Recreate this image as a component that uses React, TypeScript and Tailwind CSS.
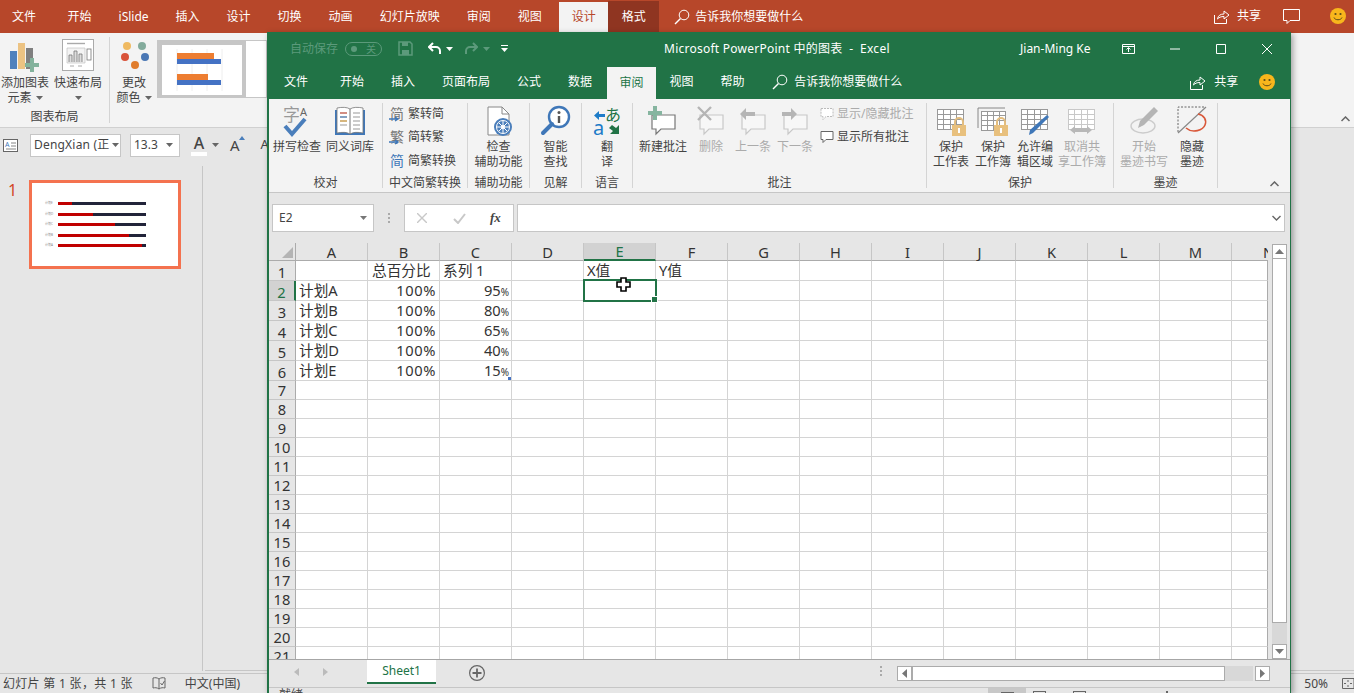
import React from "react";

const colLetters = ["A", "B", "C", "D", "E", "F", "G", "H", "I", "J", "K", "L", "M", "N"];
const rowNumbers = Array.from({ length: 21 }, (_, i) => i + 1);

const cells: Record<string, string> = {
  B1: "总百分比",
  C1: "系列 1",
  E1: "X值",
  F1: "Y值",
  A2: "计划A",
  A3: "计划B",
  A4: "计划C",
  A5: "计划D",
  A6: "计划E",
  B2: "100%",
  B3: "100%",
  B4: "100%",
  B5: "100%",
  B6: "100%",
  C2: "95",
  C3: "80",
  C4: "65",
  C5: "40",
  C6: "15",
};

const thumbBars = [
  { label: "计划E", red: 14 },
  { label: "计划D", red: 35 },
  { label: "计划C", red: 57 },
  { label: "计划B", red: 71 },
  { label: "计划A", red: 84 },
];

function Caret({ color = "#666" }: { color?: string }) {
  return (
    <svg width="7" height="4" viewBox="0 0 7 4">
      <path d="M0 0h7L3.5 4z" fill={color} />
    </svg>
  );
}

function SearchIcon() {
  return (
    <svg width="16" height="16" viewBox="0 0 16 16" fill="none" stroke="#fff" strokeWidth="1">
      <circle cx="10" cy="6" r="4.8" />
      <path d="M6.5 9.5L1 15" strokeWidth="1.4" />
    </svg>
  );
}

function ShareIcon() {
  return (
    <svg width="16" height="15" viewBox="0 0 16 15" fill="none" stroke="#fff" strokeWidth="1">
      <path d="M.5 6v8.5h12V10" />
      <path d="M3.5 10c.5-3.5 3-5 6.5-5V2l5 4-5 4V7.5c-3 0-5 .8-6.5 2.5z" />
    </svg>
  );
}

function Smiley() {
  return (
    <svg width="16" height="16" viewBox="0 0 16 16">
      <circle cx="8" cy="8" r="8" fill="#f8b61c" />
      <circle cx="5.5" cy="6" r="1.1" fill="#5a4a1a" />
      <circle cx="10.5" cy="6" r="1.1" fill="#5a4a1a" />
      <path d="M4 9.5c1 3 7 3 8 0" fill="none" stroke="#5a4a1a" strokeWidth="1" />
    </svg>
  );
}

function Bubble({ color = "#888", fill = "#fff" }: { color?: string; fill?: string }) {
  return <path d="M5 10h23v14H14l-5 5v-5H5z" fill={fill} stroke={color} strokeWidth="1.2" />;
}

function SmallBubble({ color = "#666", dashed }: { color?: string; dashed?: boolean }) {
  return (
    <svg width="14" height="14" viewBox="0 0 14 14">
      <path
        d="M1 1.5h12v8H6l-3 3v-3H1z"
        fill="#fff"
        stroke={color}
        strokeWidth="1"
        strokeDasharray={dashed ? "2 1" : undefined}
      />
    </svg>
  );
}

function SpellIcon() {
  return (
    <svg width="32" height="32" viewBox="0 0 32 32" overflow="visible">
      <text x="2" y="16" fontSize="17" fill="#999" fontFamily="Noto Sans CJK SC">字</text>
      <text x="19" y="11" fontSize="11" fill="#666" fontFamily="Noto Sans">A</text>
      <path d="M4 21l7 8L24 14" fill="none" stroke="#4a7ebb" strokeWidth="4" />
    </svg>
  );
}

function BookIcon() {
  return (
    <svg width="32" height="32" viewBox="0 0 32 32">
      <path d="M1 5h30v25H1z" fill="#3f77b8" />
      <path d="M3 3c5-1 10-1 13 1 3-2 8-2 13-1v25c-5-1-10-1-13 1-3-2-8-2-13-1z" fill="#fff" stroke="#777" strokeWidth=".8" />
      <path d="M16 4v25" stroke="#777" />
      <path d="M6 8h7M6 12h7M6 16h7M6 20h7M19 8h7M19 12h7M19 16h7M19 20h7M19 24h7" stroke="#999" />
      <path d="M6 8h7" stroke="#d9503a" />
      <path d="M6 12h7" stroke="#3f77b8" />
      <path d="M6 16h7" stroke="#e0a030" />
    </svg>
  );
}

function ConvertIcon({ ch, plain }: { ch: string; plain?: boolean }) {
  return (
    <svg width="16" height="16" viewBox="0 0 16 16" overflow="visible">
      <text x="1" y="13" fontSize="14" fill={plain ? "#3f77b8" : "#777"} fontFamily="Noto Sans CJK SC">{ch}</text>
      {!plain && <path d="M0 13h8M6 11l3 2-3 2" fill="none" stroke="#3f77b8" strokeWidth="1.4" />}
    </svg>
  );
}

function AccessIcon() {
  return (
    <svg width="32" height="32" viewBox="0 0 32 32">
      <path d="M5 2h14l7 7v21H5z" fill="#fff" stroke="#888" />
      <path d="M19 2v7h7" fill="none" stroke="#888" />
      <circle cx="20" cy="22" r="9" fill="#4a7ebb" />
      <circle cx="20" cy="22" r="6.5" fill="none" stroke="#fff" strokeWidth="1" />
      <path d="M20 16v12M14 22h12M16 18l8 8M24 18l-8 8" stroke="#fff" strokeWidth="1" />
      <circle cx="20" cy="22" r="2" fill="#fff" />
    </svg>
  );
}

function LookupIcon() {
  return (
    <svg width="32" height="32" viewBox="0 0 32 32">
      <circle cx="19" cy="12" r="10" fill="#fff" stroke="#3f77b8" strokeWidth="2.4" />
      <path d="M12 19L3 28" stroke="#3f77b8" strokeWidth="4" strokeLinecap="round" />
      <circle cx="19" cy="7.5" r="1.5" fill="#555" />
      <path d="M19 11v7" stroke="#555" strokeWidth="2.4" />
    </svg>
  );
}

function TranslateIcon() {
  return (
    <svg width="32" height="32" viewBox="0 0 32 32" overflow="visible">
      <text x="14" y="16" fontSize="16" fill="#217346" fontFamily="Noto Sans CJK JP">あ</text>
      <text x="2" y="30" fontSize="20" fill="#1e7cc8" fontFamily="Noto Sans">a</text>
      <path d="M3 10.5L8 6v3h6v3H8v3z" fill="#1e7cc8" />
      <path d="M28 29v-9l-3 3-4-3-3 3 4 3-3 3z" fill="#217346" />
    </svg>
  );
}

function NewCommentIcon() {
  return (
    <svg width="32" height="32" viewBox="0 0 32 32">
      <Bubble color="#777" />
      <path d="M6 1h4v5h5v4h-5v5H6v-5H1V6h5z" fill="#86b5a0" />
    </svg>
  );
}

function DeleteCommentIcon() {
  return (
    <svg width="32" height="32" viewBox="0 0 32 32">
      <Bubble color="#c8c8c8" fill="#f7f7f7" />
      <path d="M3 2l13 13M16 2L3 15" stroke="#b5b5b5" strokeWidth="2.4" />
    </svg>
  );
}

function ArrowCommentIcon({ right }: { right?: boolean }) {
  return (
    <svg width="32" height="32" viewBox="0 0 32 32">
      <Bubble color="#c8c8c8" fill="#f7f7f7" />
      <path
        d={right ? "M3 7h9V3l6 6-6 6v-4H3z" : "M18 7H9V3L3 9l6 6v-4h9z"}
        fill="#b5b5b5"
      />
    </svg>
  );
}

function SheetGrid({ color = "#999", x = 2, y = 4, w = 26, h = 20 }: { color?: string; x?: number; y?: number; w?: number; h?: number }) {
  const cols = [0.25, 0.5, 0.75];
  const rows = [0.25, 0.5, 0.75];
  return (
    <g stroke={color} strokeWidth="1" fill="#fff" shapeRendering="crispEdges">
      <rect x={x} y={y} width={w} height={h} />
      {cols.map((c) => (
        <path key={c} d={`M${x + w * c} ${y}v${h}`} />
      ))}
      {rows.map((r) => (
        <path key={r} d={`M${x} ${y + h * r}h${w}`} />
      ))}
    </g>
  );
}

function Lock() {
  return (
    <g>
      <path d="M20 20v-3a4 4 0 0 1 8 0v3" fill="none" stroke="#e3bd7e" strokeWidth="2" />
      <rect x="17" y="20" width="14" height="11" fill="#e8c07d" />
      <rect x="23" y="23" width="2" height="5" fill="#fff" />
    </g>
  );
}

function ProtectSheetIcon() {
  return (
    <svg width="32" height="32" viewBox="0 0 32 32">
      <SheetGrid />
      <Lock />
    </svg>
  );
}

function ProtectBookIcon() {
  return (
    <svg width="32" height="32" viewBox="0 0 32 32">
      <path d="M1 3h27" stroke="#888" />
      <path d="M1 3v20" stroke="#888" />
      <SheetGrid x={4} y={6} w={24} h={19} />
      <Lock />
    </svg>
  );
}

function AllowEditIcon() {
  return (
    <svg width="32" height="32" viewBox="0 0 32 32">
      <SheetGrid />
      <path d="M28 10l2 2-16 16-4 2 1-5z" fill="#3f77b8" />
    </svg>
  );
}

function UnshareIcon() {
  return (
    <svg width="32" height="32" viewBox="0 0 32 32">
      <SheetGrid color="#c8c8c8" />
      <path d="M4 25l5-4v2h12v-2l5 4-5 4v-2H9v2z" fill="#b8b8b8" />
    </svg>
  );
}

function InkIcon() {
  return (
    <svg width="32" height="32" viewBox="0 0 32 32">
      <ellipse cx="15" cy="21" rx="12" ry="7" fill="none" stroke="#ccc" strokeWidth="1.4" />
      <path d="M26 2l4 4-14 14-6 3 2-7z" fill="#b5b5b5" />
    </svg>
  );
}

function HideInkIcon() {
  return (
    <svg width="32" height="32" viewBox="0 0 32 32">
      <path d="M2 27V2h27" fill="none" stroke="#666" strokeDasharray="2 1.5" />
      <path d="M2 28L30 2" stroke="#888" strokeWidth="1.2" />
      <path d="M22 9c6 1 9 6 7 11s-12 9-19 3" fill="none" stroke="#d9583a" strokeWidth="1.6" />
    </svg>
  );
}

function AddChartIcon() {
  return (
    <svg width="32" height="32" viewBox="0 0 32 32">
      <rect x="1" y="10" width="7" height="18" fill="#4f81bd" />
      <rect x="9" y="2" width="7" height="26" fill="#ecc383" />
      <rect x="17" y="7" width="7" height="21" fill="#7f7f7f" />
      <path d="M21 17h4v5h5v4h-5v5h-4v-5h-5v-4h5z" fill="#83b29c" />
    </svg>
  );
}

function QuickLayoutIcon() {
  return (
    <svg width="32" height="32" viewBox="0 0 32 32">
      <rect x=".5" y=".5" width="31" height="31" fill="#fff" stroke="#aaa" />
      <path d="M5 4.5h18" stroke="#aaa" strokeWidth="1.4" />
      <path d="M5 9h18v15H5z" fill="#f3f3f3" stroke="#bbb" strokeWidth=".6" />
      <path d="M7 23v-7h3v7M12 23v-11h3v11M17 23v-8h3v8" fill="#ddd" stroke="#777" strokeWidth=".8" />
      <rect x="25" y="10" width="4" height="11" fill="#fff" stroke="#777" strokeWidth=".8" />
      <path d="M8 27h4M16 27h4" stroke="#aaa" />
    </svg>
  );
}

function ColorsIcon() {
  return (
    <svg width="32" height="32" viewBox="0 0 32 32">
      <circle cx="9" cy="5" r="4" fill="#efb961" />
      <circle cx="24" cy="5" r="4" fill="#83ab9c" />
      <circle cx="7" cy="16" r="4" fill="#d9533a" />
      <circle cx="27" cy="16" r="4" fill="#4a77b4" />
      <circle cx="17" cy="24" r="4" fill="#e07c2c" />
    </svg>
  );
}

function GalleryChart() {
  return (
    <svg width="80" height="50" viewBox="0 0 80 50">
      <rect width="80" height="50" fill="#fff" />
      <path d="M15 4v42M30 4v42M45 4v42M60 4v42" stroke="#eee" />
      <rect x="15" y="8" width="37" height="6" fill="#ed7d31" />
      <rect x="15" y="14" width="44" height="5" fill="#4472c4" />
      <rect x="15" y="29" width="31" height="6" fill="#ed7d31" />
      <rect x="15" y="35" width="44" height="5" fill="#4472c4" />
    </svg>
  );
}

function Tab({ label, className = "" }: { label: string; className?: string }) {
  return <div className={`px-[13.5px] leading-none whitespace-nowrap ${className}`}>{label}</div>;
}

function RibbonGroup({ label, width, className = "", children }: { label: string; width: string; className?: string; children: React.ReactNode }) {
  return (
    <div className={`flex flex-col h-[85px] mt-[4px] border-r border-[#d4d4d4] shrink-0 ${width}`}>
      <div className={`flex flex-1 ${className}`}>{children}</div>
      <div className="h-[13px] leading-[16px] text-center whitespace-nowrap">{label}</div>
    </div>
  );
}

function RibbonButton({ icon, lines, width, disabled }: { icon: React.ReactNode; lines: string[]; width: string; disabled?: boolean }) {
  return (
    <div className={`flex flex-col items-center pt-[2px] shrink-0 ${width} ${disabled ? "text-[#ababab]" : ""}`}>
      <div className="h-[32px] w-[32px] mb-[2px]">{icon}</div>
      {lines.map((l) => (
        <div key={l} className="leading-[15px] whitespace-nowrap">{l}</div>
      ))}
    </div>
  );
}

function SmallRow({ icon, label, disabled }: { icon: React.ReactNode; label: string; disabled?: boolean }) {
  return (
    <div className={`flex items-center gap-[3px] h-[23.5px] whitespace-nowrap ${disabled ? "text-[#ababab]" : ""}`}>
      {icon}
      <span>{label}</span>
    </div>
  );
}

function ScrollBtn({ path, className = "" }: { path: string; className?: string }) {
  return (
    <div className={`flex items-center justify-center w-[15px] h-[15px] bg-white border border-[#ababab] shrink-0 ${className}`}>
      <svg width="9" height="9" viewBox="0 0 9 9">
        <path d={path} fill="#777" />
      </svg>
    </div>
  );
}

function Dots() {
  return (
    <>
      <span className="w-[2px] h-[2px] bg-[#aaa]" />
      <span className="w-[2px] h-[2px] bg-[#aaa]" />
      <span className="w-[2px] h-[2px] bg-[#aaa]" />
    </>
  );
}

function PptRibbon() {
  return (
    <div className="flex h-[95px] bg-[#f3f3f3] border-b border-[#d0d0d0] text-[#444] text-[12px]">
      <div className="flex flex-col w-[110px] h-[86px] mt-[4px] border-r border-[#d4d4d4] shrink-0">
        <div className="flex flex-1">
          <div className="flex flex-col items-center w-[50px] shrink-0">
            <div className="h-[32px] w-[32px] mt-[4px] mb-[2px]"><AddChartIcon /></div>
            <div className="leading-[15px] whitespace-nowrap">添加图表</div>
            <div className="flex items-center gap-[4px] leading-[15px]">元素 <Caret /></div>
          </div>
          <div className="flex flex-col items-center w-[56px] shrink-0">
            <div className="h-[32px] w-[32px] mt-[2px] mb-[4px]"><QuickLayoutIcon /></div>
            <div className="leading-[15px] whitespace-nowrap">快速布局</div>
            <div className="h-[15px] flex items-center"><Caret /></div>
          </div>
        </div>
        <div className="h-[14px] leading-[15px] text-center">图表布局</div>
      </div>
      <div className="flex flex-col items-center w-[44px] ml-[2px] mt-[4px] shrink-0">
        <div className="h-[32px] w-[32px] mt-[4px] mb-[2px]"><ColorsIcon /></div>
        <div className="leading-[15px]">更改</div>
        <div className="flex items-center gap-[4px] leading-[15px]">颜色 <Caret /></div>
      </div>
      <div className="flex ml-[1px] mt-[7px] h-[58px] shrink-0 border border-[#c6c6c6] bg-white">
        <div className="border-[4px] border-[#c6c6c6] h-[56px]"><GalleryChart /></div>
        <div className="w-[20px] bg-white" />
      </div>
    </div>
  );
}

function PptFontRow() {
  return (
    <div className="flex items-center h-[38px] pb-[4px] bg-[#e6e6e6] text-[#444] text-[12px]">
      <svg className="ml-[3px]" width="15" height="13" viewBox="0 0 15 13" overflow="visible">
        <rect x=".5" y=".5" width="14" height="12" fill="#fff" stroke="#666" />
        <text x="2" y="8" fontSize="7" fill="#3f77b8" fontFamily="Noto Sans">A</text>
        <path d="M8 4h5M8 7h5M3 10h10" stroke="#666" strokeWidth=".8" />
      </svg>
      <div className="flex items-center justify-between ml-[12px] w-[91px] h-[23px] px-[3px] bg-white border border-[#c6c6c6] whitespace-nowrap">
        <span className="tracking-[0.2px]">DengXian (正</span>
        <span className="shrink-0 pl-[2px]"><Caret /></span>
      </div>
      <div className="flex items-center justify-between ml-[9px] w-[50px] h-[23px] px-[3px] pr-[6px] bg-white border border-[#c6c6c6]">
        <span>13.3</span>
        <Caret />
      </div>
      <div className="ml-[11px] flex flex-col items-center w-[16px] text-[16px] leading-[17px] font-medium">
        <span>A</span>
        <span className="w-[16px] h-[4px] bg-white" />
      </div>
      <span className="ml-[5px]"><Caret /></span>
      <span className="ml-[11px] relative text-[15px]">
        A
        <svg className="absolute top-[2px] -right-[5px]" width="6" height="4" viewBox="0 0 6 4"><path d="M0 4l3-4 3 4z" fill="#4a7ebb" /></svg>
      </span>
      <span className="ml-[21px] text-[13px]">A</span>
    </div>
  );
}

function SlidePanel() {
  return (
    <div className="flex flex-1 min-h-0 bg-[#e6e6e6]">
      <div className="flex w-[203px] h-[505px] border-r border-[#c6c6c6] pt-[14px] shrink-0">
        <div className="w-[29px] pl-[8px] text-[16px] leading-[20px] text-[#d24726]">1</div>
        <div className="flex flex-col justify-center gap-[7.5px] w-[152px] h-[89px] border-[3px] border-[#f4724f] bg-white pl-[13px]">
          {thumbBars.map((b) => (
            <div key={b.label} className="flex items-center h-[3px]">
              <span className="w-[13px] text-[3px] leading-[3px] text-[#888] whitespace-nowrap">{b.label}</span>
              <div className="w-[88px] h-[3px] bg-[#22243a]">
                <div className="h-[3px] bg-[#c00000]" style={{ width: b.red }} />
              </div>
            </div>
          ))}
        </div>
      </div>
      <div className="flex-1 h-[505px] border-b border-[#c6c6c6] ml-[2px]" />
    </div>
  );
}

function PptStatus() {
  return (
    <div className="flex items-center h-[20px] bg-[#e6e6e6] border-t border-[#c6c6c6] text-[#444] text-[12px]">
      <span className="ml-[3px] whitespace-nowrap tracking-[0.3px]">幻灯片 第 1 张，共 1 张</span>
      <svg className="ml-[19px]" width="14" height="13" viewBox="0 0 14 13" fill="none" stroke="#666">
        <path d="M7 2C5 .5 3 .5 1 1v10c2-.5 4-.5 6 1 2-1.5 4-1.5 6-1V1c-2-.5-4-.5-6 1zM7 2v10" />
        <path d="M8.5 6l1.5 2 2.5-4" />
      </svg>
      <span className="ml-[19px] whitespace-nowrap">中文(中国)</span>
      <span className="ml-auto mr-[14px]">50%</span>
      <svg width="12" height="13" viewBox="0 0 12 13" fill="none" stroke="#666">
        <path d="M.5 1.5h11.5v10H.5z" />
        <path d="M6 3v2M6 8v2M2 6.5h2M8 6.5h2" />
      </svg>
    </div>
  );
}

function ExcelTitleBar() {
  return (
    <div className="flex items-center h-[33px] bg-[#217346] text-white text-[12px] shrink-0">
      <span className="ml-[21px] text-[#5c9a7b] whitespace-nowrap">自动保存</span>
      <div className="flex items-center justify-between ml-[7px] w-[37px] h-[14px] px-[5px] rounded-full border border-[#5c9a7b] text-[#5c9a7b] text-[10px] leading-none">
        <span className="w-[6px] h-[6px] rounded-full bg-[#5c9a7b]" />
        <span>关</span>
      </div>
      <svg className="ml-[16px]" width="15" height="15" viewBox="0 0 15 15">
        <path d="M1 1h11l2 2v11H1z" fill="none" stroke="#5c9a7b" strokeWidth="1.5" />
        <path d="M4 1h6v4H4zM4 9h7v5H4z" fill="#5c9a7b" />
      </svg>
      <svg className="ml-[15px]" width="14" height="13" viewBox="0 0 14 13" fill="none" stroke="#fff" strokeWidth="2">
        <path d="M5 1L1 5l4 4" />
        <path d="M1 5h7a4 4 0 0 1 4 4v3" />
      </svg>
      <span className="ml-[4px]"><Caret color="#fff" /></span>
      <svg className="ml-[11px]" width="14" height="13" viewBox="0 0 14 13" fill="none" stroke="#5c9a7b" strokeWidth="2">
        <path d="M9 1l4 4-4 4" />
        <path d="M13 5H6a4 4 0 0 0-4 4v3" />
      </svg>
      <span className="ml-[5px]"><Caret color="#5c9a7b" /></span>
      <svg className="ml-[11px]" width="7" height="7" viewBox="0 0 7 7">
        <path d="M0 0h7v1H0zM0 3h7L3.5 7z" fill="#fff" />
      </svg>
      <span className="ml-[156px] w-[227px] whitespace-pre tracking-[0.25px]">Microsoft PowerPoint 中的图表  -  Excel</span>
      <span className="ml-[129px] w-[76px] whitespace-nowrap">Jian-Ming Ke</span>
      <svg className="ml-[26px]" width="13" height="10" viewBox="0 0 13 10" fill="none" stroke="#fff">
        <path d="M.5.5h12v9H.5zM.5 2.5h12M6.5 8V4M4.5 5.5l2-2 2 2" />
      </svg>
      <svg className="ml-[35px]" width="10" height="10" viewBox="0 0 10 10"><path d="M0 5h10" stroke="#fff" /></svg>
      <svg className="ml-[36px]" width="10" height="10" viewBox="0 0 10 10"><path d="M.5.5h9v9h-9z" fill="none" stroke="#fff" /></svg>
      <svg className="ml-[36px]" width="10" height="10" viewBox="0 0 10 10"><path d="M0 0l10 10M10 0L0 10" stroke="#fff" /></svg>
    </div>
  );
}

function ExcelTabs() {
  return (
    <div className="flex items-stretch h-[34px] bg-[#217346] text-white text-[12px] shrink-0">
      <div className="flex items-center pl-[15px] pr-[13.5px]">文件</div>
      <Tab label="开始" className="ml-[5px] flex items-center" />
      <Tab label="插入" className="flex items-center" />
      <Tab label="页面布局" className="flex items-center" />
      <Tab label="公式" className="flex items-center" />
      <Tab label="数据" className="flex items-center" />
      <div className="flex items-center justify-center w-[49px] ml-[1.5px] mt-[2px] bg-[#f3f3f3] text-[#217346]">审阅</div>
      <Tab label="视图" className="flex items-center" />
      <Tab label="帮助" className="flex items-center" />
      <div className="flex items-center ml-[14px]">
        <SearchIcon />
        <span className="ml-[6px] whitespace-nowrap">告诉我你想要做什么</span>
      </div>
      <div className="flex items-center ml-[288px]">
        <ShareIcon />
        <span className="ml-[8px]">共享</span>
      </div>
      <div className="flex items-center ml-[21px]"><Smiley /></div>
    </div>
  );
}

function ExcelRibbon() {
  return (
    <div className="relative flex h-[94px] bg-[#f3f3f3] border-b border-[#c6c6c6] text-[#444] text-[12px] shrink-0">
      <RibbonGroup label="校对" width="w-[114px]" className="pl-[1.5px]">
        <RibbonButton icon={<SpellIcon />} lines={["拼写检查"]} width="w-[53px]" />
        <RibbonButton icon={<BookIcon />} lines={["同义词库"]} width="w-[53px]" />
      </RibbonGroup>
      <RibbonGroup label="中文简繁转换" width="w-[85px]" className="flex-col pl-[6px] -mt-[1px]">
        <SmallRow icon={<ConvertIcon ch="简" />} label="繁转简" />
        <SmallRow icon={<ConvertIcon ch="繁" />} label="简转繁" />
        <SmallRow icon={<ConvertIcon ch="简" plain />} label="简繁转换" />
      </RibbonGroup>
      <RibbonGroup label="辅助功能" width="w-[62px]">
        <RibbonButton icon={<AccessIcon />} lines={["检查", "辅助功能"]} width="w-full" />
      </RibbonGroup>
      <RibbonGroup label="见解" width="w-[52px]">
        <RibbonButton icon={<LookupIcon />} lines={["智能", "查找"]} width="w-full" />
      </RibbonGroup>
      <RibbonGroup label="语言" width="w-[51px]">
        <RibbonButton icon={<TranslateIcon />} lines={["翻", "译"]} width="w-full" />
      </RibbonGroup>
      <RibbonGroup label="批注" width="w-[294px]" className="pl-[4px]">
        <RibbonButton icon={<NewCommentIcon />} lines={["新建批注"]} width="w-[52px]" />
        <RibbonButton icon={<DeleteCommentIcon />} lines={["删除"]} width="w-[44px]" disabled />
        <RibbonButton icon={<ArrowCommentIcon />} lines={["上一条"]} width="w-[40px]" disabled />
        <RibbonButton icon={<ArrowCommentIcon right />} lines={["下一条"]} width="w-[44px]" disabled />
        <div className="flex flex-col ml-[3px] -mt-[1px]">
          <SmallRow icon={<SmallBubble color="#bbb" dashed />} label="显示/隐藏批注" disabled />
          <SmallRow icon={<SmallBubble />} label="显示所有批注" />
        </div>
      </RibbonGroup>
      <RibbonGroup label="保护" width="w-[187px]" className="pl-[3px]">
        <RibbonButton icon={<ProtectSheetIcon />} lines={["保护", "工作表"]} width="w-[42px]" />
        <RibbonButton icon={<ProtectBookIcon />} lines={["保护", "工作簿"]} width="w-[42px]" />
        <RibbonButton icon={<AllowEditIcon />} lines={["允许编", "辑区域"]} width="w-[42px]" />
        <RibbonButton icon={<UnshareIcon />} lines={["取消共", "享工作簿"]} width="w-[52px]" disabled />
      </RibbonGroup>
      <RibbonGroup label="墨迹" width="w-[104px]" className="pl-[4px]">
        <RibbonButton icon={<InkIcon />} lines={["开始", "墨迹书写"]} width="w-[52px]" disabled />
        <RibbonButton icon={<HideInkIcon />} lines={["隐藏", "墨迹"]} width="w-[44px]" />
      </RibbonGroup>
      <svg className="absolute right-[11px] bottom-[5px]" width="9" height="6" viewBox="0 0 9 6" fill="none" stroke="#666" strokeWidth="1.5">
        <path d="M.5 5l4-4 4 4" />
      </svg>
    </div>
  );
}

function FormulaBar() {
  return (
    <div className="flex items-center h-[50px] bg-[#e6e6e6] text-[#444] text-[12px] pl-[3px] shrink-0">
      <div className="flex items-center justify-between w-[102px] h-[28px] px-[6px] bg-white border border-[#c6c6c6]">
        <span>E2</span>
        <Caret color="#777" />
      </div>
      <div className="flex flex-col gap-[2px] ml-[14px]">
        <Dots />
      </div>
      <div className="flex items-center w-[110px] h-[28px] ml-[14px] bg-white border border-[#c6c6c6]">
        <svg className="ml-[12px]" width="10" height="10" viewBox="0 0 10 10"><path d="M0 0l10 10M10 0L0 10" stroke="#c8c8c8" strokeWidth="1.4" /></svg>
        <svg className="ml-[26px]" width="13" height="11" viewBox="0 0 13 11" fill="none"><path d="M1 6l4 4 7-9" stroke="#c8c8c8" strokeWidth="2" /></svg>
        <span className="ml-[24px] italic font-bold font-['Liberation_Serif',serif] text-[13px]">fx</span>
      </div>
      <div className="flex items-center justify-end w-[768px] h-[28px] ml-[3px] pr-[3px] bg-white border border-[#c6c6c6]">
        <svg width="9" height="6" viewBox="0 0 9 6" fill="none" stroke="#666" strokeWidth="1.4"><path d="M.5 1l4 4 4-4" /></svg>
      </div>
    </div>
  );
}

function Sheet() {
  return (
    <div className="flex h-[416px] bg-[#e6e6e6] shrink-0">
      <div className="relative w-[999px] h-[416px] overflow-hidden shrink-0 grid grid-cols-[27px_repeat(13,72px)_36px] auto-rows-min content-start text-[14.67px] text-[#333]">
        <div className="h-[18px] flex items-end justify-end pr-[2px] pb-[2px] border-r border-b border-[#ababab]">
          <svg width="11" height="11" viewBox="0 0 11 11"><path d="M11 0v11H0z" fill="#b4b4b4" /></svg>
        </div>
        {colLetters.map((c) => (
          <div
            key={c}
            className={`h-[18px] flex items-center leading-[16px] ${
              c === "E"
                ? "bg-[#d2d2d2] border-b-2 border-[#217346] text-[#217346]"
                : "border-b border-[#ababab]"
            } ${c === "N" ? "justify-start pl-[31px] overflow-hidden" : "justify-center border-r border-r-[#c6c6c6]"}`}
          >
            {c}
          </div>
        ))}
        {rowNumbers.map((r) => {
          const rowH = r <= 6 ? "h-[20px] pt-[2px]" : "h-[19px]";
          return (
            <React.Fragment key={r}>
              <div
                className={`${rowH} flex items-center justify-center border-b border-[#c6c6c6] leading-[16px] ${
                  r === 2 ? "bg-[#d2d2d2] border-r-2 border-r-[#217346] text-[#217346]" : "border-r border-r-[#ababab]"
                }`}
              >
                {r}
              </div>
              {colLetters.map((c) => {
                const key = `${c}${r}`;
                const val = cells[key];
                const right = c === "B" && r > 1;
                const pct = c === "C" && r > 1 && val;
                return (
                  <div
                    key={key}
                    className={`relative ${r <= 6 ? "h-[20px]" : "h-[19px]"} flex items-center bg-white border-b border-r border-[#d4d4d4] whitespace-nowrap leading-none ${
                      right || pct ? "justify-end" : key === "B1" ? "pl-[4px]" : "pl-[3px]"
                    } ${right ? "pr-[3px] tracking-[0.6px]" : pct ? "pr-[2px]" : ""} ${c === "N" ? "border-r-[#ababab]" : ""} ${key === "E2" ? "z-10" : ""}`}
                  >
                    {pct ? (
                      <span>
                        {val}
                        <span className="text-[10px]">%</span>
                      </span>
                    ) : (
                      val
                    )}
                    {key === "C6" && <span className="absolute right-0 bottom-0 w-[3px] h-[3px] bg-[#4472c4]" />}
                    {key === "E2" && (
                      <>
                        <span className="absolute -left-[1px] -top-[2px] w-[74px] h-[23px] border-2 border-[#217346]" />
                        <span className="absolute -right-[3px] -bottom-[3px] w-[7px] h-[7px] bg-[#217346] border border-white" />
                        <svg className="absolute left-[32px] -top-[4px]" width="15" height="15" viewBox="0 0 15 15">
                          <path d="M5 1h5v4h4v5h-4v4H5v-4H1V5h4z" fill="#fff" stroke="#000" strokeWidth="1.6" />
                        </svg>
                      </>
                    )}
                  </div>
                );
              })}
            </React.Fragment>
          );
        })}
      </div>
      <div className="flex flex-col w-[15px] ml-[4px] mt-[1px] shrink-0">
        <ScrollBtn path="M0 7h9L4.5 2z" />
        <div className="h-[365px] bg-white border border-[#ababab] -mt-[1px]" />
        <div className="h-[21px] bg-[#d8d8d8]" />
        <ScrollBtn path="M0 2h9L4.5 7z" />
      </div>
    </div>
  );
}

function SheetTabs() {
  return (
    <div className="flex items-stretch h-[28px] bg-[#e6e6e6] border-t border-[#a6a6a6] shrink-0 relative">
      <svg className="ml-[25px] mt-[8px]" width="5" height="8" viewBox="0 0 5 8"><path d="M5 0v8L0 4z" fill="#bbb" /></svg>
      <svg className="ml-[24px] mt-[8px]" width="5" height="8" viewBox="0 0 5 8"><path d="M0 0v8l5-4z" fill="#bbb" /></svg>
      <div className="flex items-center justify-center w-[69px] h-[24px] ml-[39px] bg-white border-b-2 border-[#217346] text-[#217346] text-[12px]">
        Sheet1
      </div>
      <svg className="ml-[33px] mt-[5px]" width="16" height="16" viewBox="0 0 16 16" fill="none" stroke="#666" strokeWidth="1.2">
        <circle cx="8" cy="8" r="7.4" />
        <path d="M8 3.5v9M3.5 8h9" strokeWidth="1.8" />
      </svg>
      <div className="flex flex-col gap-[2px] ml-[395px] mt-[6px]">
        <Dots />
      </div>
      <div className="flex ml-[15px] mt-[6px] h-[15px]">
        <ScrollBtn path="M7 0v9L2 4.5z" />
        <div className="w-[313px] bg-white border border-[#ababab]" />
        <div className="w-[28px] bg-[#d8d8d8]" />
        <ScrollBtn path="M2 0v9l5-4.5z" className="ml-[2px]" />
      </div>
    </div>
  );
}

function ExcelStatus() {
  return (
    <div className="flex items-start h-[6px] bg-[#e6e6e6] border-t border-[#c6c6c6] overflow-hidden text-[12px] text-[#444]">
      <span className="ml-[10px] leading-[14px]">就绪</span>
      <div className="flex justify-center items-end ml-[685px] h-[6px] w-[38px] bg-[#c8c8c8]">
        <span className="w-[13px] h-[2px] border-t border-x border-[#666]" />
      </div>
      <span className="ml-[7px] mt-[3px] w-[13px] h-[2px] border-t border-x border-[#666]" />
      <span className="ml-[27px] mt-[3px] w-[13px] h-[2px] border-t border-x border-[#666]" />
      <span className="ml-[80px] mt-[3px] w-[2px] h-[2px] bg-[#666]" />
    </div>
  );
}

export default function App() {
  return (
    <div className="relative w-[1354px] h-[693px] overflow-hidden bg-[#e6e6e6] font-['Noto_Sans','Noto_Sans_CJK_SC',sans-serif]">
      <div className="flex flex-col h-[693px]">
        <div className="flex items-center h-[33px] bg-[#b7472a] text-white text-[12px] shrink-0">
          <div className="pl-[12px] pr-[12px] leading-none">文件</div>
          <Tab label="开始" className="ml-[6px]" />
          <Tab label="iSlide" />
          <Tab label="插入" />
          <Tab label="设计" />
          <Tab label="切换" />
          <Tab label="动画" />
          <Tab label="幻灯片放映" />
          <Tab label="审阅" />
          <Tab label="视图" />
          <div className="flex items-center justify-center w-[49px] h-[31px] ml-[4px] mt-[1px] bg-[#f3f3f3] text-[#b7472a]">设计</div>
          <div className="flex items-center justify-center w-[51px] h-[32px] bg-[#8f3521]">格式</div>
          <div className="flex items-center ml-[15px]">
            <SearchIcon />
            <span className="ml-[5px] whitespace-nowrap">告诉我你想要做什么</span>
          </div>
          <div className="flex items-center ml-auto -mt-[1px]">
            <ShareIcon />
            <span className="ml-[7px]">共享</span>
            <svg className="ml-[22px]" width="17" height="15" viewBox="0 0 17 15" fill="none" stroke="#fff">
              <path d="M.5.5h16v11H7l-3 3v-3H.5z" />
            </svg>
            <span className="ml-[30px] mr-[8px]"><Smiley /></span>
          </div>
        </div>
        <div className="relative shrink-0">
          <PptRibbon />
          <svg className="absolute right-[4px] bottom-[6px]" width="9" height="6" viewBox="0 0 9 6" fill="none" stroke="#666" strokeWidth="1.5">
            <path d="M.5 5l4-4 4 4" />
          </svg>
        </div>
        <PptFontRow />
        <SlidePanel />
        <PptStatus />
      </div>

      <div className="absolute left-[267px] top-[32px] flex flex-col w-[1024px] h-[661px] bg-[#e6e6e6] border-l-2 border-r border-[#217346] shadow-[2px_2px_6px_rgba(0,0,0,0.35)]">
        <ExcelTitleBar />
        <ExcelTabs />
        <ExcelRibbon />
        <FormulaBar />
        <Sheet />
        <SheetTabs />
        <ExcelStatus />
      </div>
    </div>
  );
}
